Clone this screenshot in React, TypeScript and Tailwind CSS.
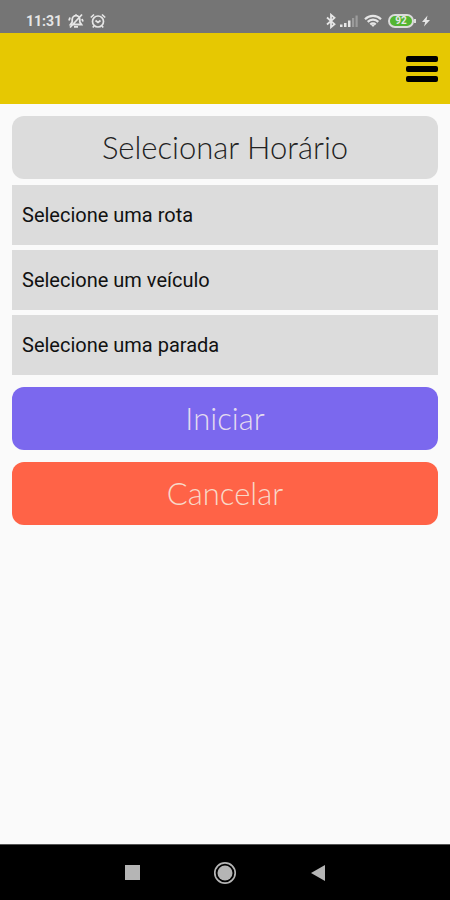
import { useState } from 'react'

const fields = [
  { id: 'rota', label: 'Rota', placeholder: 'Selecione uma rota' },
  { id: 'veiculo', label: 'Veículo', placeholder: 'Selecione um veículo' },
  { id: 'parada', label: 'Parada', placeholder: 'Selecione uma parada' },
]

function StatusBar() {
  return (
    <div className="flex h-[33px] items-center justify-between bg-[#757575] pt-2 pr-5 pl-[26px] text-[#e6e6e6]">
      <div className="flex items-center gap-1.5">
        <span className="text-sm leading-4 font-bold">11:31</span>
        {/* muted bell */}
        <svg className="h-4 w-4" viewBox="0 0 16 16" fill="none" stroke="currentColor" strokeWidth="1.8">
          <path d="M2.500 11.500 4.200 9V6.500a3.800 3.800 0 0 1 7.600 0V9l1.700 2.500zM6 13.800h4M8 3V1.200M2 14.500 14 1.500M1 7.500 2 4.500M15 8.500l-1-2.500" />
        </svg>
        <svg className="h-4 w-4" viewBox="0 0 16 16" fill="none" stroke="currentColor" strokeWidth="1.7">
          <circle cx="8" cy="8.500" r="5.500" />
          <path d="M5.500 7.500 8 9.500l2.500-2M.8 4.500 4 1.500M15.200 4.500 12 1.500M4 13l-1.200 1.500M12 13l1.200 1.500" />
        </svg>
      </div>
      <div className="flex items-center">
        <svg className="h-4 w-[10px]" viewBox="0 0 10 16" fill="none" stroke="currentColor" strokeWidth="1.800">
          <path d="M1 4.500 8.500 11.200 5 14.200V1.800l3.500 3L1 11.500" />
        </svg>
        <svg className="ml-1 h-4 w-[18px]" viewBox="0 0 18 16" fill="currentColor">
          <path d="M0 11.500h2.500V14H0zM4 10h2.500v4H4zM8 7.500h2.500V14H8z" />
          <path opacity="0.350" d="M12 5h2.200v9H12zM15.500 2.500h2.200V14h-2.200z" />
        </svg>
        <svg className="ml-1.5 h-4 w-[18px]" viewBox="0 0 18 16" fill="none" stroke="currentColor" strokeWidth="2.200">
          <path d="M1 6.200a11.500 11.500 0 0 1 16 0M3.700 8.900a7.500 7.500 0 0 1 10.600 0M6.300 11.500a3.800 3.800 0 0 1 5.400 0" />
          <path d="m6.800 11.500 2.200 2.500 2.200-2.500z" fill="currentColor" stroke="none" />
        </svg>
        <span className="ml-1.5 flex h-[14px] w-[26px] items-center justify-center rounded-full border-2 border-[#dcdcdc] bg-[#53b532] text-[10px] leading-none font-bold">
          92
        </span>
        <span className="h-1 w-0.5 bg-[#dcdcdc]" />
        <svg className="ml-1.5 h-4 w-2" viewBox="0 0 8 16" fill="currentColor">
          <path d="M5.500 2.500 0 9h3.200L2 13.500 8 7H4.600z" />
        </svg>
      </div>
    </div>
  )
}

function Header() {
  return (
    <header className="flex h-[71px] items-center justify-end bg-[#e6c802] px-3">
      <button type="button" aria-label="Menu" className="flex flex-col gap-1">
        <span className="h-1.5 w-8 rounded-xs bg-black" />
        <span className="h-1.5 w-8 rounded-xs bg-black" />
        <span className="h-1.5 w-8 rounded-xs bg-black" />
      </button>
    </header>
  )
}

function NavBar() {
  return (
    <nav className="flex h-14 items-center justify-center gap-[69px] border-t border-[#555] bg-black text-[#b5b5b5]">
      <button type="button" aria-label="Recentes" className="flex w-6 justify-center">
        <span className="h-[15px] w-[15px] bg-current" />
      </button>
      <button type="button" aria-label="Início" className="flex w-6 justify-center">
        <svg className="h-6 w-6" viewBox="0 0 24 24">
          <circle cx="12" cy="12" r="10.200" fill="none" stroke="currentColor" strokeWidth="1.700" />
          <circle cx="12" cy="12" r="7.500" fill="currentColor" />
        </svg>
      </button>
      <button type="button" aria-label="Voltar" className="flex w-6 justify-center">
        <svg className="h-4 w-4" viewBox="0 0 16 16" fill="currentColor">
          <path d="M15 0v16L1 8z" />
        </svg>
      </button>
    </nav>
  )
}

export default function App() {
  const [values, setValues] = useState<Record<string, string>>({})

  return (
    <div className="flex min-h-screen flex-col bg-[#fafafa] font-['Roboto',sans-serif]">
      <StatusBar />
      <Header />

      <main className="flex flex-1 flex-col px-3 pt-3">
        <button
          type="button"
          className="h-[63px] rounded-xl bg-[#dcdcdc] font-['Lato',sans-serif] text-[31px] font-light text-[#222]"
        >
          Selecionar Horário
        </button>

        <div className="mt-1.5 flex flex-col gap-[5px]">
          {fields.map((field) => (
            <select
              key={field.id}
              aria-label={field.label}
              value={values[field.id] ?? ''}
              onChange={(e) => setValues({ ...values, [field.id]: e.target.value })}
              className="h-[60px] w-full appearance-none bg-[#dcdcdc] px-2.5 text-xl text-[#111]"
            >
              <option value="">{field.placeholder}</option>
            </select>
          ))}
        </div>

        <div className="mt-3 flex flex-col gap-3 font-['Lato',sans-serif] text-[31px] font-light text-[#e4dcf0]">
          <button type="button" className="h-[63px] rounded-xl bg-[#7b68ee]">
            Iniciar
          </button>
          <button type="button" className="h-[63px] rounded-xl bg-[#ff6347] text-[#f8d8c8]">
            Cancelar
          </button>
        </div>
      </main>

      <NavBar />
    </div>
  )
}
